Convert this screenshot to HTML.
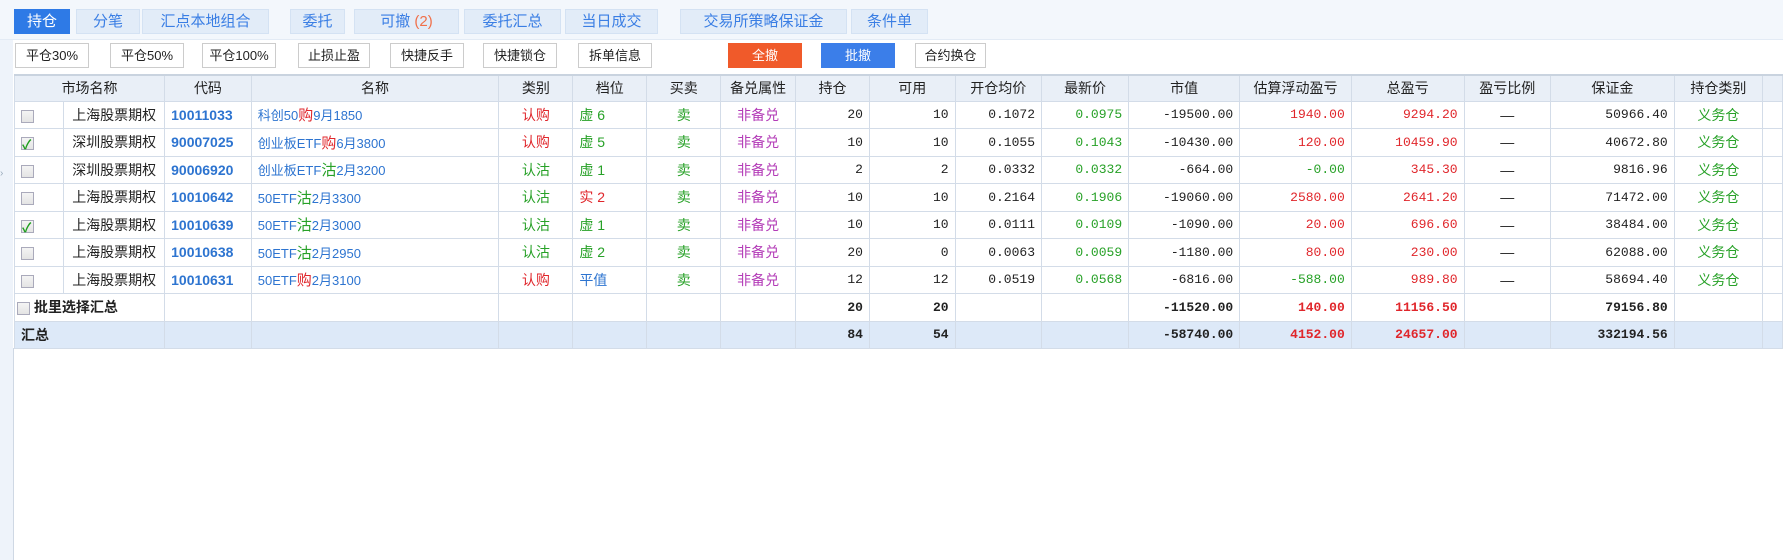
<!DOCTYPE html>
<html><head><meta charset="utf-8"><style>
*{margin:0;padding:0;box-sizing:border-box}
body{width:1783px;height:560px;background:#fff;font-family:"Liberation Sans","Noto Sans CJK SC",sans-serif;position:relative;overflow:hidden;color:#222}
.top{position:absolute;left:0;top:0;width:1783px;height:40px;background:#f3f7fc;border-bottom:1px solid #e3ebf5}
.tab{position:absolute;top:9px;height:25px;background:#e2ecf8;border:1px solid #d4e2f3;color:#3a7ee4;font-size:15px;line-height:23px;text-align:center}
.tab.on{background:#2e7ae6;color:#fff;border-color:#2e7ae6}
.btn{position:absolute;top:43px;height:25px;background:#fff;border:1px solid #ccc;font-size:13px;line-height:23px;text-align:center;color:#222}
.leftbar{position:absolute;left:0;top:40px;width:13px;height:520px;background:#eef3fa}
table{position:absolute;left:14px;top:74px;border-collapse:collapse;table-layout:fixed;font-size:14px}
td,th{border:1px solid #d3dce8;white-space:nowrap;overflow:hidden;padding:0 6px}
th{background:#e9eff7;font-weight:normal;height:26px;text-align:center;color:#222;border-top:2px solid #c9d3df}
td{height:27.5px}
.m{font-family:"Liberation Mono",monospace;text-align:right;font-size:13px}
.c{text-align:center}
.code{color:#2d74d0;font-weight:bold;font-family:"Liberation Sans",sans-serif;font-size:14px}
.nm{color:#2d74d0;font-size:13px}
.r{color:#e0262b}.g{color:#27a127}.p{color:#b33bb7}.b{color:#2d74d0}
.big{font-size:15px}
.cb{display:inline-block;width:13px;height:13px;border:1px solid #aab;background:linear-gradient(#f4f4f4,#e4e4e4);vertical-align:middle;position:relative}
.cb.k::after{content:"✓";position:absolute;left:0;top:-4px;color:#1e9e1e;font-size:13px;font-weight:bold}
tr.sum td{font-weight:bold}
tr.tot td{background:#dde9f8;font-weight:bold}
.frame{position:absolute;left:13px;top:348px;width:1px;height:212px;background:#cfd8e4}
</style></head><body>
<div class="top"></div>
<div class="tab on" style="left:14px;width:56px">持仓</div>
<div class="tab" style="left:76px;width:64px">分笔</div>
<div class="tab" style="left:142px;width:127px">汇点本地组合</div>
<div class="tab" style="left:290px;width:55px">委托</div>
<div class="tab" style="left:354px;width:105px">可撤 <span style="color:#f0704a">(2)</span></div>
<div class="tab" style="left:464px;width:97px">委托汇总</div>
<div class="tab" style="left:565px;width:93px">当日成交</div>
<div class="tab" style="left:680px;width:167px">交易所策略保证金</div>
<div class="tab" style="left:851px;width:77px">条件单</div>
<div class="leftbar"></div>
<div style="position:absolute;left:0;top:168px;color:#9ab;font-size:10px">›</div>
<div class="btn" style="left:15px;width:74px">平仓30%</div>
<div class="btn" style="left:110px;width:74px">平仓50%</div>
<div class="btn" style="left:202px;width:74px">平仓100%</div>
<div class="btn" style="left:298px;width:72px">止损止盈</div>
<div class="btn" style="left:390px;width:74px">快捷反手</div>
<div class="btn" style="left:483px;width:74px">快捷锁仓</div>
<div class="btn" style="left:578px;width:74px">拆单信息</div>
<div class="btn" style="left:728px;width:74px;background:#f05a2a;border-color:#f05a2a;color:#fff">全撤</div>
<div class="btn" style="left:821px;width:74px;background:#3b7ee9;border-color:#3b7ee9;color:#fff">批撤</div>
<div class="btn" style="left:915px;width:71px">合约换仓</div>
<div class="frame"></div>
<table>
<colgroup><col style="width:50px"><col style="width:101px"><col style="width:87px"><col style="width:251px"><col style="width:75px"><col style="width:75px"><col style="width:75px"><col style="width:75px"><col style="width:75px"><col style="width:87px"><col style="width:87px"><col style="width:88px"><col style="width:112px"><col style="width:112px"><col style="width:114px"><col style="width:87px"><col style="width:125px"><col style="width:89px"><col style="width:20px"></colgroup>
<tr><th colspan="2">市场名称</th><th>代码</th><th>名称</th><th>类别</th><th>档位</th><th>买卖</th><th>备兑属性</th><th>持仓</th><th>可用</th><th>开仓均价</th><th>最新价</th><th>市值</th><th>估算浮动盈亏</th><th>总盈亏</th><th>盈亏比例</th><th>保证金</th><th>持仓类别</th><th></th></tr>
<tr><td><span class="cb"></span></td><td class="c">上海股票期权</td><td class="code">10011033</td><td class="nm">科创50<span class="r big">购</span>9月1850</td><td class="c r">认购</td><td class="g">虚 6</td><td class="c g">卖</td><td class="c p">非备兑</td><td class="m">20</td><td class="m">10</td><td class="m">0.1072</td><td class="m g">0.0975</td><td class="m">-19500.00</td><td class="m r">1940.00</td><td class="m r">9294.20</td><td class="c">—</td><td class="m">50966.40</td><td class="c g">义务仓</td><td></td></tr>
<tr><td><span class="cb k"></span></td><td class="c">深圳股票期权</td><td class="code">90007025</td><td class="nm">创业板ETF<span class="r big">购</span>6月3800</td><td class="c r">认购</td><td class="g">虚 5</td><td class="c g">卖</td><td class="c p">非备兑</td><td class="m">10</td><td class="m">10</td><td class="m">0.1055</td><td class="m g">0.1043</td><td class="m">-10430.00</td><td class="m r">120.00</td><td class="m r">10459.90</td><td class="c">—</td><td class="m">40672.80</td><td class="c g">义务仓</td><td></td></tr>
<tr><td><span class="cb"></span></td><td class="c">深圳股票期权</td><td class="code">90006920</td><td class="nm">创业板ETF<span class="g big">沽</span>2月3200</td><td class="c g">认沽</td><td class="g">虚 1</td><td class="c g">卖</td><td class="c p">非备兑</td><td class="m">2</td><td class="m">2</td><td class="m">0.0332</td><td class="m g">0.0332</td><td class="m">-664.00</td><td class="m g">-0.00</td><td class="m r">345.30</td><td class="c">—</td><td class="m">9816.96</td><td class="c g">义务仓</td><td></td></tr>
<tr><td><span class="cb"></span></td><td class="c">上海股票期权</td><td class="code">10010642</td><td class="nm">50ETF<span class="g big">沽</span>2月3300</td><td class="c g">认沽</td><td class="r">实 2</td><td class="c g">卖</td><td class="c p">非备兑</td><td class="m">10</td><td class="m">10</td><td class="m">0.2164</td><td class="m g">0.1906</td><td class="m">-19060.00</td><td class="m r">2580.00</td><td class="m r">2641.20</td><td class="c">—</td><td class="m">71472.00</td><td class="c g">义务仓</td><td></td></tr>
<tr><td><span class="cb k"></span></td><td class="c">上海股票期权</td><td class="code">10010639</td><td class="nm">50ETF<span class="g big">沽</span>2月3000</td><td class="c g">认沽</td><td class="g">虚 1</td><td class="c g">卖</td><td class="c p">非备兑</td><td class="m">10</td><td class="m">10</td><td class="m">0.0111</td><td class="m g">0.0109</td><td class="m">-1090.00</td><td class="m r">20.00</td><td class="m r">696.60</td><td class="c">—</td><td class="m">38484.00</td><td class="c g">义务仓</td><td></td></tr>
<tr><td><span class="cb"></span></td><td class="c">上海股票期权</td><td class="code">10010638</td><td class="nm">50ETF<span class="g big">沽</span>2月2950</td><td class="c g">认沽</td><td class="g">虚 2</td><td class="c g">卖</td><td class="c p">非备兑</td><td class="m">20</td><td class="m">0</td><td class="m">0.0063</td><td class="m g">0.0059</td><td class="m">-1180.00</td><td class="m r">80.00</td><td class="m r">230.00</td><td class="c">—</td><td class="m">62088.00</td><td class="c g">义务仓</td><td></td></tr>
<tr><td><span class="cb"></span></td><td class="c">上海股票期权</td><td class="code">10010631</td><td class="nm">50ETF<span class="r big">购</span>2月3100</td><td class="c r">认购</td><td class="b">平值</td><td class="c g">卖</td><td class="c p">非备兑</td><td class="m">12</td><td class="m">12</td><td class="m">0.0519</td><td class="m g">0.0568</td><td class="m">-6816.00</td><td class="m g">-588.00</td><td class="m r">989.80</td><td class="c">—</td><td class="m">58694.40</td><td class="c g">义务仓</td><td></td></tr>
<tr class="sum"><td colspan="2" style="padding-left:2px"><span class="cb"></span> 批里选择汇总</td><td></td><td></td><td></td><td></td><td></td><td></td><td class="m">20</td><td class="m">20</td><td></td><td></td><td class="m">-11520.00</td><td class="m r">140.00</td><td class="m r">11156.50</td><td></td><td class="m">79156.80</td><td></td><td></td></tr>
<tr class="tot"><td colspan="2">汇总</td><td></td><td></td><td></td><td></td><td></td><td></td><td class="m">84</td><td class="m">54</td><td></td><td></td><td class="m">-58740.00</td><td class="m r">4152.00</td><td class="m r">24657.00</td><td></td><td class="m">332194.56</td><td></td><td></td></tr>
</table>
</body></html>
